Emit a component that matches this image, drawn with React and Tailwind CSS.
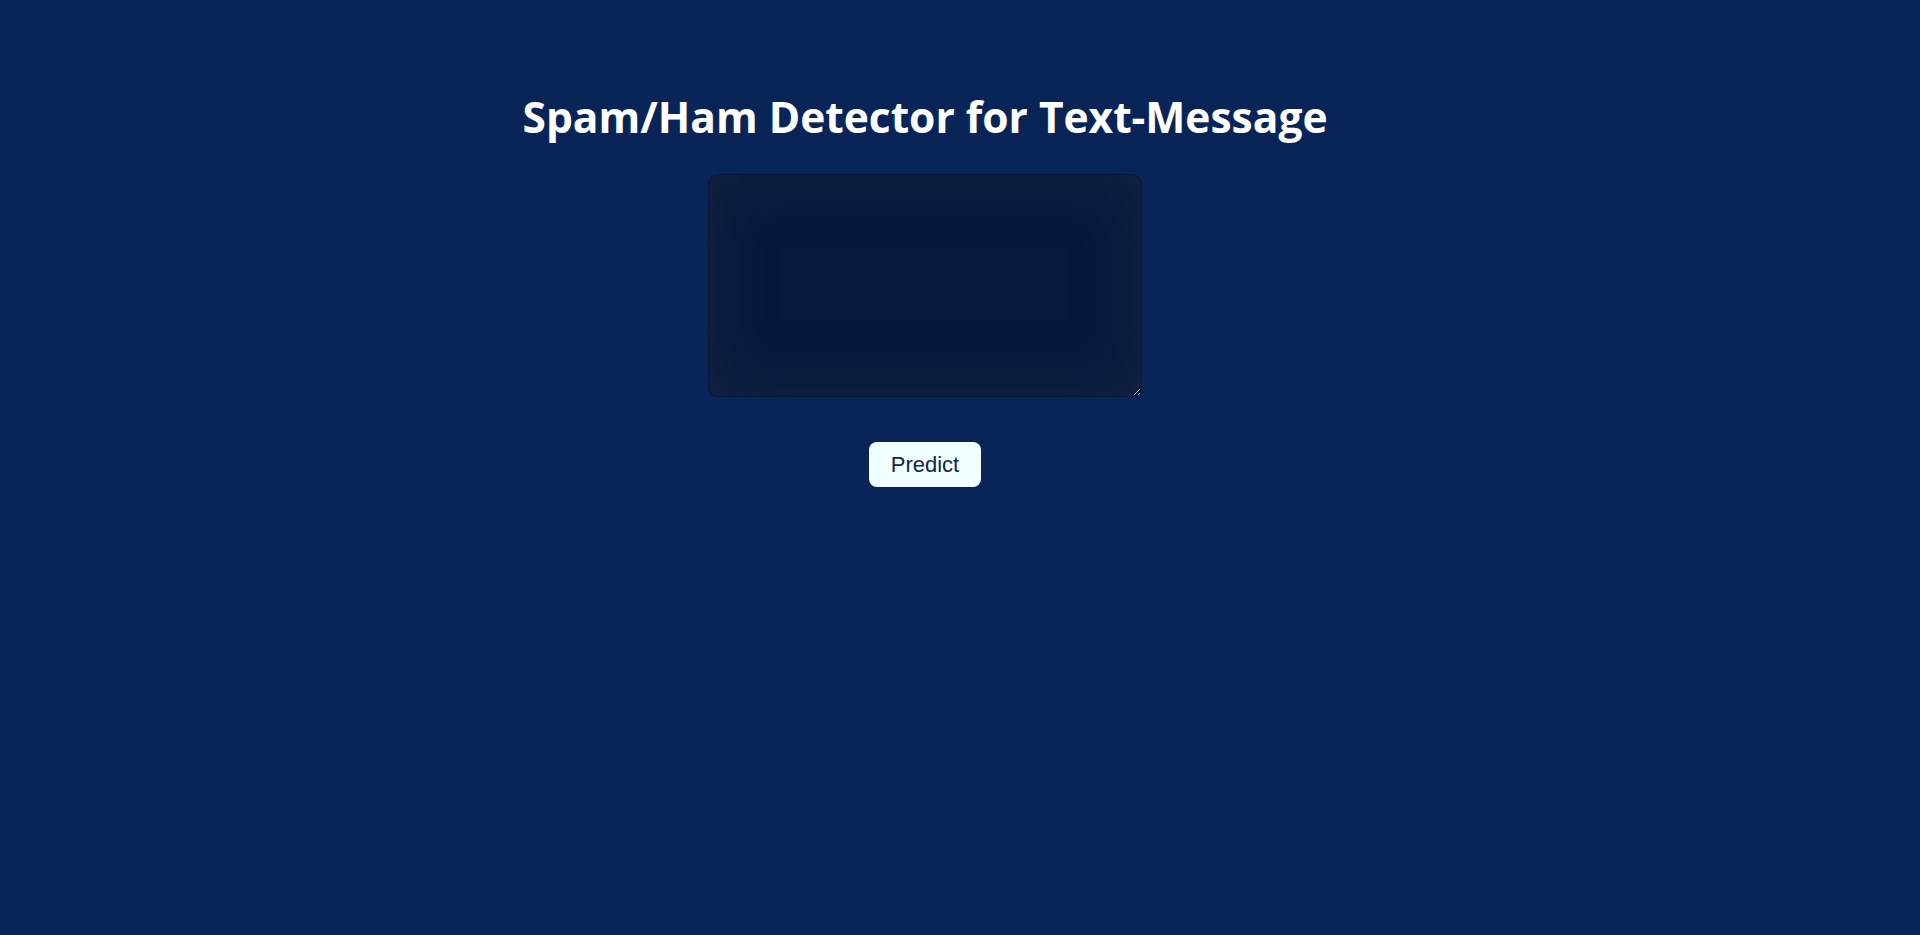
import React, { useState } from "react";

export default function App() {
  const [message, setMessage] = useState("");

  return (
    <div className="min-h-screen w-full bg-[#092557] flex flex-col items-center pr-[70px] pt-[88px]">
      <h1
        className="text-[42.5px] leading-[57px] font-bold text-white"
        style={{ fontFamily: '"Open Sans", sans-serif' }}
      >
        Spam/Ham Detector for Text-Message
      </h1>

      <form onSubmit={(e) => e.preventDefault()} className="flex flex-col items-center">
        <textarea
          value={message}
          onChange={(e) => setMessage(e.target.value)}
          className="mt-[29px] w-[434px] h-[223px] rounded-[10px] border border-[#07193a] bg-[#061a3d] shadow-[inset_0_0_60px_#16233f] text-white p-3 focus:outline-none"
        />

        <button
          type="submit"
          className="mt-[45px] bg-[#f0ffff] text-[#14254a] text-[22px] leading-[25px] px-[22px] py-[10px] rounded-[8px]"
          style={{ fontFamily: '"Liberation Sans", Arial, sans-serif' }}
        >
          Predict
        </button>
      </form>
    </div>
  );
}
